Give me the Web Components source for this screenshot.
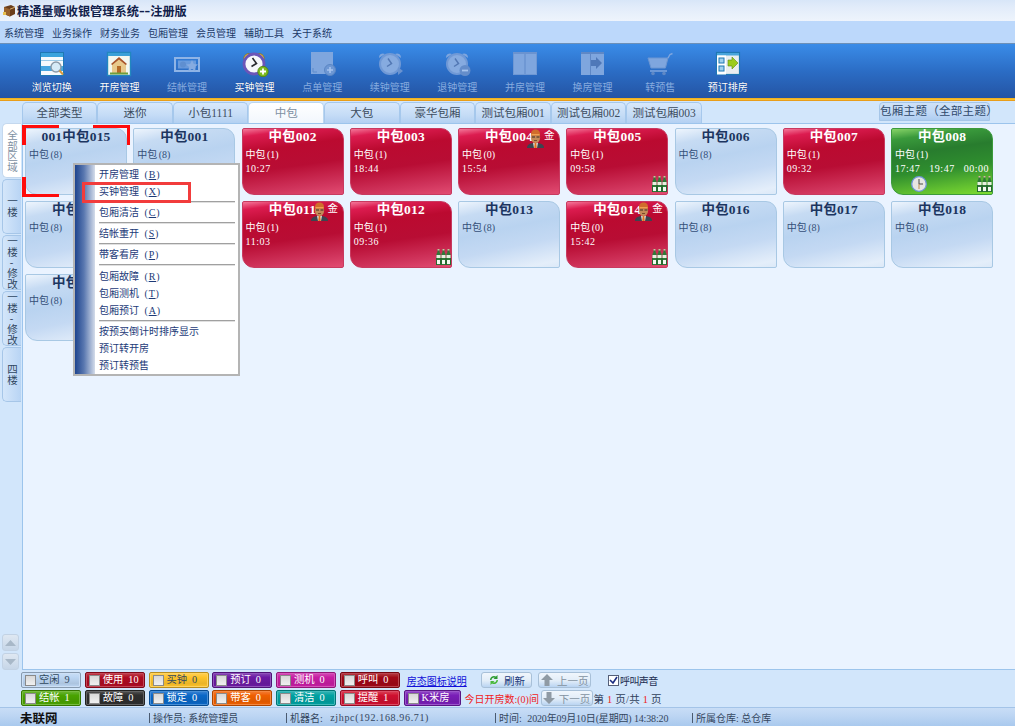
<!DOCTYPE html>
<html lang="zh"><head><meta charset="utf-8"><title>精通量贩收银管理系统</title>
<style>
html,body{margin:0;padding:0;height:726px;overflow:hidden;font-family:"Liberation Serif","Noto Sans CJK SC",sans-serif;font-size:10px;background:#d2e6fb}
app-shell{width:1015px;height:726px}
</style></head><body>
<app-shell>
  <title-bar>精通量贩收银管理系统<span style="font-size:17px;line-height:0">--</span>注册版</title-bar>
  <menu-bar></menu-bar>
  <tool-bar>
    <tool-item icon="browse">浏览切换</tool-item>
    <tool-item icon="house">开房管理</tool-item>
    <tool-item icon="money" disabled>结帐管理</tool-item>
    <tool-item icon="alarm">买钟管理</tool-item>
    <tool-item icon="order" disabled>点单管理</tool-item>
    <tool-item icon="renew" disabled>续钟管理</tool-item>
    <tool-item icon="back" disabled>退钟管理</tool-item>
    <tool-item icon="merge" disabled>并房管理</tool-item>
    <tool-item icon="swap" disabled>换房管理</tool-item>
    <tool-item icon="cart" disabled>转预售</tool-item>
    <tool-item icon="plan">预订排房</tool-item>
  </tool-bar>
  <type-tabs></type-tabs>
  <main-area>
    <side-rail slot="rail"></side-rail>
    <room-panel>
      <room-card name="001中包015" marked></room-card>
      <room-card name="中包001"></room-card>
      <room-card name="中包002" state="red" count="1" t1="10:27"></room-card>
      <room-card name="中包003" state="red" count="1" t1="18:44"></room-card>
      <room-card name="中包004" state="red" count="0" t1="15:54" person></room-card>
      <room-card name="中包005" state="red" count="1" t1="09:58" bottles></room-card>
      <room-card name="中包006"></room-card>
      <room-card name="中包007" state="red" count="1" t1="09:32"></room-card>
      <room-card name="中包008" state="green" count="1" t1="17:47" t2="19:47" t3="00:00" bottles clock></room-card>
      <room-card name="中包009" partial></room-card>
      <room-card blank></room-card>
      <room-card name="中包011" state="red" count="1" t1="11:03" person></room-card>
      <room-card name="中包012" state="red" count="1" t1="09:36" bottles></room-card>
      <room-card name="中包013"></room-card>
      <room-card name="中包014" state="red" count="0" t1="15:42" person bottles></room-card>
      <room-card name="中包016"></room-card>
      <room-card name="中包017"></room-card>
      <room-card name="中包018"></room-card>
      <room-card name="中包019" partial></room-card>
      <context-menu slot="overlay"></context-menu>
    </room-panel>
  </main-area>
  <bottom-bar></bottom-bar>
  <status-bar></status-bar>
</app-shell>
<script>
const FONT='"Liberation Serif","Noto Sans CJK SC",sans-serif';
function def(name,html){
  customElements.define(name,class extends HTMLElement{
    constructor(){super();this.attachShadow({mode:'open'})}
    connectedCallback(){
      this.shadowRoot.innerHTML=typeof html==='function'?html(this):html;
    }
  });
}
const ICONS={
browse:`<rect x="3.500" y="1.500" width="23" height="23" fill="#f6fafd" stroke="#1f78b4"/><rect x="4" y="2" width="22" height="4" fill="#3ba3dd"/><rect x="4" y="9" width="22" height="1" fill="#9bcbe8"/><rect x="4" y="15" width="22" height="5" fill="#46a6e0"/><circle cx="19" cy="16" r="5" fill="#d7ebf7" stroke="#8b9aa8" stroke-width="1.400"/><path d="M22.500 19.500l3.500 4" stroke="#d89a3c" stroke-width="2"/>`,
house:`<rect x="3.500" y="1.500" width="23" height="23" fill="#f3f7ef" stroke="#2287bf" stroke-width="1.400"/><rect x="4" y="2" width="22" height="3" fill="#3aa0d8"/><path d="M15 7l-7 6v9h14v-9z" fill="#e8c98c"/><path d="M15 6L7 13l1.200 1L15 8.500l6.800 5.500L23 13z" fill="#a8542a"/><rect x="13" y="15" width="4" height="7" fill="#b46a26"/><rect x="6" y="21.500" width="18" height="2" fill="#6f9e3a"/>`,
money:`<rect x="3" y="7" width="24" height="13" fill="none" stroke="#8fb4e6" stroke-width="2"/><rect x="6" y="9.500" width="18" height="8" fill="#8fb4e6" opacity=".6"/><circle cx="11" cy="13.500" r="3" fill="#5f8fd0"/><path d="M20 9l1.800 4 4.200.4-3.200 2.700 1 4.200-3.800-2.300-3.800 2.300 1-4.200-3.200-2.700 4.200-.4z" fill="#86abe0"/>`,
alarm:`<path d="M4 9a5 5 0 0 1 7-6z" fill="#f0c23a" stroke="#7c6a20" stroke-width=".7"/><path d="M24 9a5 5 0 0 0-7-6z" fill="#f0c23a" stroke="#7c6a20" stroke-width=".7"/><circle cx="14" cy="13" r="10" fill="#f6f7fb" stroke="#6b55b8" stroke-width="2.800"/><path d="M12.500 7l4 5.500-5 3" fill="none" stroke="#2a2a30" stroke-width="1.600"/><circle cx="23" cy="20.500" r="5.200" fill="#7cbb1e" stroke="#4c7d12" stroke-width=".8"/><path d="M23 17.500v6M20 20.500h6" stroke="#fff" stroke-width="1.800"/>`,
order:`<rect x="4" y="1" width="22" height="22" fill="#7fa6de"/><path d="M6 17v4h4" fill="none" stroke="#5f8ccc"/><circle cx="23" cy="19" r="5.500" fill="#6d97d4" stroke="#5a86c4"/><path d="M23 16v6M20 19h6" stroke="#a6c4ee" stroke-width="1.600"/>`,
renew:`<path d="M4 7a4 4 0 0 1 6-4zM26 7a4 4 0 0 0-6-4z" fill="#7fa6de"/><circle cx="15" cy="13" r="10" fill="#86abe0" stroke="#7099d6" stroke-width="2"/><path d="M13 7.500l3.500 5-4.500 3" fill="none" stroke="#5378b4" stroke-width="1.500"/><path d="M23 16l5 4-5 4z" fill="#6a93d0"/>`,
back:`<path d="M4 7a4 4 0 0 1 6-4zM26 7a4 4 0 0 0-6-4z" fill="#7fa6de"/><circle cx="15" cy="13" r="10" fill="#86abe0" stroke="#7099d6" stroke-width="2"/><path d="M13 7.500l3.500 5-4.500 3" fill="none" stroke="#5378b4" stroke-width="1.500"/><circle cx="23" cy="19.500" r="5.500" fill="#648dca"/><path d="M20 19.500h6" stroke="#a6c4ee" stroke-width="1.800"/>`,
merge:`<rect x="3.500" y="1.500" width="11" height="22" fill="#7fa6de" stroke="#6f98d4"/><rect x="15.500" y="1.500" width="11" height="22" fill="#7fa6de" stroke="#6f98d4"/><rect x="3" y="1" width="24" height="2" fill="#6a93d0"/>`,
swap:`<rect x="3" y="1" width="23" height="23" fill="#7fa6de"/><rect x="3" y="1" width="23" height="2" fill="#5f88c6"/><rect x="12" y="3" width="1" height="21" fill="#5f88c6"/><path d="M13 9h5V6l6 6-6 6v-3h-5z" fill="#4f78b8"/>`,
cart:`<path d="M3 7h20l-2.600 10H6z" fill="#7fa6de" stroke="#6c96d2"/><path d="M23 7l2-3.500 2.500-1" fill="none" stroke="#7fa6de" stroke-width="1.400"/><path d="M5 20h17" stroke="#7fa6de" stroke-width="1.500"/><circle cx="8" cy="22.500" r="1.800" fill="#5f88c6"/><circle cx="19" cy="22.500" r="1.800" fill="#5f88c6"/>`,
plan:`<rect x="3.500" y="1.500" width="23" height="22" fill="#e9eef0" stroke="#1f78b4" stroke-width="1.200"/><rect x="4" y="2" width="22" height="2.500" fill="#49a5dc"/><rect x="4" y="4.500" width="9" height="19" fill="#fff"/><rect x="6" y="7" width="5" height="5" fill="#9fd0ee" stroke="#1f78b4"/><rect x="6" y="15" width="5" height="5" fill="#9fd0ee" stroke="#1f78b4"/><path d="M15 9h4V6l6 6-6 6v-3h-4z" fill="#9ccc1c" stroke="#5d8a10" stroke-width=".6"/>`
};
def('app-shell',`<style>:host{display:flex;flex-direction:column;overflow:hidden}</style><slot></slot>`);
def('title-bar',`<style>:host{display:flex;align-items:center;height:21px;background:linear-gradient(#d8e6f8,#e2ecfa 35%,#eef4fc);box-sizing:border-box;padding-left:3px;font:bold 12.200px ${FONT};color:#10204a;flex:none}
svg{margin-right:1px}</style><svg width="13" height="13" viewBox="0 0 13 13"><path d="M1 3l7-2 4 2v7l-5 2.500L1 10z" fill="#6a3e1c"/><path d="M1 3l6 2.200V12.500L1 10z" fill="#9a622c"/><path d="M7 5.200l5-2" stroke="#d8b070" fill="none"/><rect x="0" y="8" width="3" height="3" fill="#e8c050"/></svg><span><slot></slot></span>`);
def('menu-bar',()=>`<style>:host{display:flex;height:22px;background:#bcd8fb;flex:none;align-items:flex-end;padding:0 0 3px 4px;box-sizing:border-box;font:10px ${FONT};color:#1c3a68;gap:8px}span{width:40px;line-height:12px}</style>`+['系统管理','业务操作','财务业务','包厢管理','会员管理','辅助工具','关于系统'].map(s=>`<span>${s}</span>`).join(''));
def('tool-bar',`<style>:host{display:flex;height:58px;box-sizing:border-box;padding-left:18px;flex:none;background:linear-gradient(#6c90b8 0 1px,#3a8ce8 1px,#2b6cc4 50%,#2454a4 55px,#f0a818 55px,#f8c030 56.500px,#e08c10 58px)}</style><slot></slot>`);
def('tool-item',h=>`<style>:host{display:flex;flex-direction:column;align-items:center;width:67.600px;font:10px ${FONT};color:${h.hasAttribute('disabled')?'#86abdf':'#fff'};${h.hasAttribute('disabled')?'':'text-shadow:0 0 1px #123a80;'}}
svg{margin-top:8px;display:block}span{margin-top:4px;line-height:13px}</style><svg width="30" height="26" viewBox="0 0 30 26">${ICONS[h.getAttribute('icon')]}</svg><span><slot></slot></span>`);
def('type-tabs',()=>`<style>:host{display:flex;height:22px;box-sizing:border-box;padding:1px 0 0 21.700px;background:#d2e6fb;flex:none;font:11.500px ${FONT};color:#3d4d60;position:relative}
b{font-weight:normal;width:75.600px;box-sizing:border-box;height:21px;text-align:center;line-height:21px;border:1px solid #a6c8ec;border-bottom:0;border-radius:5px 5px 0 0;background:linear-gradient(#d8e8fb,#c5dcf6 60%,#b3d0f2);white-space:nowrap}
b.on{background:linear-gradient(#fff,#f2f7fd);color:#8090a2;border-color:#bcd6f0}
i{font-style:normal;margin-left:auto;margin-right:25px;width:111px;height:19px;box-sizing:border-box;border:1px solid #a6c6e8;border-radius:4px 4px 0 0;text-align:center;line-height:17px;background:linear-gradient(#cfe2f8,#c0d8f5 60%,#aecdf1);color:#2f4a6c;white-space:nowrap;letter-spacing:.3px}</style>`+['全部类型','迷你','小包1111','中包','大包','豪华包厢','测试包厢001','测试包厢002','测试包厢003'].map(s=>`<b class="${s==='中包'?'on':''}">${s}</b>`).join('')+`<i>包厢主题（全部主题）</i>`);
def('main-area',`<style>:host{display:flex;height:547px;flex:none}</style><slot name="rail"></slot><slot></slot>`);
def('side-rail',()=>`<style>:host{display:flex;flex-direction:column;width:22px;flex:none;box-sizing:border-box;padding:0 0 0 2px;gap:1px;background:#d2e6fb;font:10.500px ${FONT};color:#2f4660}
b{font-weight:normal;display:block;width:19px;height:55px;box-sizing:border-box;border:1px solid #a6c6e8;border-right:0;border-radius:5px 0 0 5px;background:linear-gradient(90deg,#d4e6fa,#b8d4f4);writing-mode:vertical-rl;text-orientation:upright;text-align:center;line-height:15px;padding-right:2px;white-space:nowrap;overflow:hidden}
b.on{background:#fff;color:#8090a2;border-color:#c4d8ee}
.sp{flex:1}
u{display:flex;width:17px;height:17px;box-sizing:border-box;border:1px solid #c2d2e4;border-radius:3px;background:linear-gradient(#dfe8f2,#c6d6e8);align-items:center;justify-content:center}
.wrap{display:flex;flex-direction:column;gap:2px}</style>`+[['全部区域',1],['一楼'],['一楼-修改'],['一楼-修改'],['四楼']].map(x=>`<b class="${x[1]?'on':''}">${x[0]}</b>`).join('')+`<div class="sp"></div><div class="wrap"><u><svg width="11" height="6"><path d="M5.500 0L11 6H0z" fill="#a8b8c8"/></svg></u><u><svg width="11" height="6"><path d="M5.500 6L11 0H0z" fill="#a8b8c8"/></svg></u></div>`);
def('room-panel',`<style>:host{display:block;position:relative;flex:1;background:#eaf3ff;border-top:1px solid #9cc4ec;border-left:1px solid #9cc4ec;border-bottom:1px solid #9cc4ec;box-sizing:border-box}
.g{display:grid;grid-template-columns:repeat(9,102px);grid-auto-rows:67px;gap:6px 6.250px;padding:4px 0 0 2px}</style><div class="g"><slot></slot></div><slot name="overlay"></slot>`);
const PERSON=`<svg class="p" width="17" height="19" viewBox="0 0 17 19"><path d="M0 19c0-3.500 2.500-5 8.500-5s8.500 1.500 8.500 5z" fill="#3c4450"/><path d="M6 13.500l2.500 1 2.500-1 -1 5.500H7z" fill="#e8e8e0"/><path d="M7.700 14h1.600l.5 5H7.200z" fill="#e07020"/><ellipse cx="8.500" cy="8.500" rx="4.600" ry="5.500" fill="#c48a58"/><path d="M4 6.500C3.500 2 6 .5 8.500.5S13.500 2 13 6.500z" fill="#d06c2c"/><rect x="4.500" y="5" width="8" height="1.200" fill="#f0a050"/><path d="M5 8h3M9.500 8h3" stroke="#3a2a20" stroke-width="1.100"/><path d="M7 11.500h3" stroke="#7a4a2a"/></svg><span class="j">金</span>`;
const BOT=`<svg class="b" width="15" height="16" viewBox="0 0 15 16"><rect y="9" width="15" height="7" fill="#1e5a28"/>`+[0,5,10].map(x=>`<path d="M${x+1.500} 0h2v3l1 2v11h-4V5l1-2z" fill="#2f7a38"/><rect x="${x+.5}" y="6" width="4" height="3" fill="#e8f0e0"/><rect x="${x+1}" y="11" width="3" height="4" fill="#f4f8f0"/><rect x="${x+1.500}" y="0" width="2" height="1.500" fill="#d8b8a0"/>`).join('')+`</svg>`;
const CLK=`<svg class="c" width="16" height="16" viewBox="0 0 16 16"><circle cx="8" cy="8" r="7.300" fill="#e6e6e2" stroke="#6f95d8" stroke-width="1.300"/><path d="M8 3v5h4" fill="none" stroke="#4a4a44" stroke-width="1"/><path d="M8 8v5" stroke="#c09050"/></svg>`;
def('room-card',h=>{
  const a=k=>h.getAttribute(k),s=a('state'),c=a('count')||'8';
  const bg=s==='red'?'linear-gradient(172deg,#f4789a 0,#dc1c50 10%,#bb0a30 30%,#b80d34 56%,#d0345c 84%,#e24c72 100%)':s==='green'?'linear-gradient(172deg,#88d468 0,#3a9a3c 14%,#287c2e 34%,#2f8e2e 60%,#62c030 85%,#7edc30 100%)':'linear-gradient(168deg,#eef5fd 0,#c6dbf3 18%,#b9d3f0 42%,#c4d9f3 65%,#e4eefa 92%,#dce9f8 100%)';
  const col=s?'#fff':'#1c3560',tc=s?'#fff':'#344f78',bd=s==='red'?'#c83a60':s==='green'?'#3c9a3c':'#a8c8e4';
  const ts=[a('t1'),a('t2'),a('t3')].filter(Boolean);
  const body=h.hasAttribute('blank')?'':`<h3>${a('name')}</h3><div class="l">中包 <span>(${c})</span></div>${ts.length?`<div class="t">${ts.map(x=>`<span>${x}</span>`).join('')}</div>`:''}`;
  return `<style>:host{display:block;position:relative;box-sizing:border-box;border:1px solid ${bd};border-radius:2px 11px 2px 12px;background:${bg};color:${tc};font:10px ${FONT}}
h3{margin:0;font:bold 13.500px ${FONT};text-align:center;color:${col};line-height:16px;letter-spacing:.2px}
.l{position:absolute;left:3px;top:20px;line-height:12px;word-spacing:-1px}
.t{position:absolute;left:3px;right:3px;top:33px;line-height:13px;display:flex;justify-content:space-between;letter-spacing:.5px}
.p{position:absolute;left:68px;top:0}.j{position:absolute;left:85px;top:1px;color:#fff;line-height:12px;font-size:10.500px}
.b{position:absolute;right:0;bottom:2px}.c{position:absolute;left:19px;bottom:2px}
m{position:absolute;border:solid #ff0c0c;width:37px;height:20px;box-sizing:border-box;display:block}
.a{left:-4px;top:-4px;border-width:3px 0 0 4px}.d{right:-4px;top:-4px;border-width:3px 3px 0 0}.e{left:-4px;bottom:-3px;border-width:0 0 3px 4px}</style>
${body}${h.hasAttribute('person')?PERSON:''}${h.hasAttribute('bottles')?BOT:''}${h.hasAttribute('clock')?CLK:''}${h.hasAttribute('marked')?'<m class="a"></m><m class="d"></m><m class="e"></m>':''}`;
});
def('context-menu',()=>{
  const it=(t,k)=>`<div class="i">${t}${k?` <span>(<u>${k}</u>)</span>`:''}</div>`,sp='<hr>';
  return `<style>:host{position:absolute;left:50px;top:39px;width:167px;height:213px;box-sizing:border-box;border:2px solid #b4b4b4;background:#fff;display:flex;font:10px ${FONT};color:#1c3a78;z-index:5}
.bar{width:20px;flex:none;background:linear-gradient(90deg,#1e448e,#5a78b0 45%,#d4dcea)}
.m{flex:1;padding:1px 3px 0 4px}
.i{height:17px;line-height:17px;white-space:nowrap}.i span{margin-left:3px;letter-spacing:.8px}
hr{border:0;border-top:1px solid #a0a0a0;border-bottom:1px solid #e0e0e0;margin:1px 0;height:0}
hr.x{margin-bottom:2px}
.r{position:absolute;left:7px;top:17px;width:109px;height:21px;box-sizing:border-box;border:3px solid #f23c3c}</style>
<div class="bar"></div><div class="m">${it('开房管理','B')}${it('买钟管理','X')}${sp}${it('包厢清洁','C')}${sp}${it('结帐重开','S')}${sp}${it('带客看房','P')}<hr class="x">${it('包厢故障','R')}${it('包厢测机','T')}${it('包厢预订','A')}${sp}${it('按预买倒计时排序显示')}${it('预订转开房')}${it('预订转预售')}</div><div class="r"></div>`;
});
def('legend-chip',h=>{
  const c=h.getAttribute('color'),d=h.hasAttribute('dark'),w=h.getAttribute('w')||60;
  return `<style>:host{display:flex;align-items:center;width:${w}px;height:16px;box-sizing:border-box;border:1px solid color-mix(in srgb,${c} 72%,#000);border-radius:2px;box-shadow:inset 0 0 0 1px color-mix(in srgb,${c} 75%,#fff);background:linear-gradient(color-mix(in srgb,${c} 80%,#fff),${c} 30%,color-mix(in srgb,${c} 92%,#000) 75%,${c});color:${d?'#31495f':'#fff'};font:10.300px ${FONT};line-height:12px;padding:0 0 1px 3px}
i{width:11px;height:11px;box-sizing:border-box;background:linear-gradient(#d8d8d8,#f0f0f0);border:1px solid #8a8a8a;flex:none;margin-right:3px;margin-top:1px}b{font-weight:normal;margin-left:5px}
span{white-space:nowrap}</style><i></i><span>${h.getAttribute('label')}</span><b>${h.getAttribute('n')}</b>`;
});
def('push-btn',h=>`<style>:host{display:flex;align-items:center;justify-content:center;gap:4px;height:16px;box-sizing:border-box;border:1px solid #a8c0d8;border-radius:3px;background:linear-gradient(#f0f6fc,#e2edf8 55%,#b9d4f2);font:10.500px ${FONT};color:${h.hasAttribute('off')?'#8492a0':'#1a3a7c'};width:${h.getAttribute('w')}px;flex:none}</style><slot></slot>`);
def('bottom-bar',()=>{
  const ch=(l,n,c,x='')=>`<legend-chip label="${l}" n="${n}" color="${c}" ${x}></legend-chip>`;
  const up=`<svg width="12" height="12" viewBox="0 0 12 12"><path d="M6 0l6 6H8.500v6h-5V6H0z" fill="#8f9aa4"/></svg>`;
  const dn=`<svg width="12" height="12" viewBox="0 0 12 12"><path d="M6 12l6-6H8.500V0h-5v6H0z" fill="#8f9aa4"/></svg>`;
  const rf=`<svg width="12" height="12" viewBox="0 0 12 12"><path d="M2 6a4 4 0 0 1 6-3.500L9.500 1v4h-4l1.300-1.300A2.500 2.500 0 0 0 3.500 6z" fill="#2a9a30"/><path d="M10 6a4 4 0 0 1-6 3.500L2.500 11V7h4L5.200 8.300A2.500 2.500 0 0 0 8.500 6z" fill="#48b83a"/></svg>`;
  return `<style>:host{display:flex;flex-direction:column;gap:2px;height:37px;box-sizing:border-box;padding:2px 0 0 21px;background:#d2e6fb;font:10px ${FONT};flex:none}
.r{display:flex;gap:3.750px;height:16px;align-items:center}
a{color:#1010d8;text-decoration:underline;margin-left:3.250px;white-space:nowrap;width:60px}
.red{color:#f01c1c;white-space:nowrap;width:73px;margin-left:.250px}
.ck{display:flex;align-items:center;color:#1a2c50;margin-left:13px;white-space:nowrap;font-size:10px;letter-spacing:-.6px}
.ck i{width:11px;height:11px;box-sizing:border-box;border:1px solid #555f78;background:#fff;display:flex;align-items:center;justify-content:center;margin-right:1px}
.pg{color:#30405a;margin-left:-2.750px;white-space:pre;font-size:10.500px;letter-spacing:.2px}.pg em{font-style:normal;color:#f01c1c}</style>
<div class="r">${ch('空闲',9,'#bcd6f3','dark')}${ch('使用',10,'#b00c22')}${ch('买钟',0,'#ffc42a','dark')}${ch('预订',0,'#6c1aa4')}${ch('测机',0,'#c81ea4')}${ch('呼叫',0,'#a20818')}<a>房态图标说明</a><push-btn w="51" style="margin-left:10.500px">${rf}刷新</push-btn><push-btn w="53" off style="margin-left:2.500px">${up}上一页</push-btn><div class="ck"><i><svg width="9" height="9"><path d="M1 4l3 3 4-6" fill="none" stroke="#1a2c80" stroke-width="1.600"/></svg></i>呼叫声音</div></div>
<div class="r">${ch('结帐',1,'#4aa400')}${ch('故障',0,'#2e2e2e')}${ch('锁定',0,'#0a68c8')}${ch('带客',0,'#f06000')}${ch('清洁',0,'#00a2a2')}${ch('提醒',1,'#d01030')}${ch('K米房','','#7a1eb8','w="57"')}<span class="red">今日开房数:(0)间</span><push-btn w="52" off style="margin-left:-.750px">${dn}下一页</push-btn><span class="pg">第 <em>1</em> 页/共 <em>1</em> 页</span></div>`;
});
def('status-bar',()=>{
  const c=t=>`<div><s></s>${t}</div>`;
  return `<style>:host{display:grid;grid-template-columns:149px 137px 209px 197px 1fr;align-items:center;height:19px;box-sizing:border-box;border-top:1px solid #a4c4e8;background:linear-gradient(#c8ddf6,#bcd5f3 45%,#a9c9ee);font:10px ${FONT};color:#34465e;flex:none}
div{white-space:nowrap;display:flex;align-items:center}s{width:1px;height:10px;background:#4a5a70;margin-right:3px}
.f{font:bold 12.500px ${FONT};color:#101010;padding-left:20px}tt{font:inherit;letter-spacing:.65px;margin-left:5px}tt.d{letter-spacing:-.15px;margin-left:3px}</style>
<div class="f">未联网</div>${c('操作员:&nbsp;系统管理员')}${c('机器名:&nbsp;<tt>zjhpc(192.168.96.71)</tt>')}${c('时间:&nbsp;<tt class="d">2020年09月10日(星期四) 14:38:20</tt>')}${c('所属仓库:&nbsp;总仓库')}`;
});
</script>
</body></html>
